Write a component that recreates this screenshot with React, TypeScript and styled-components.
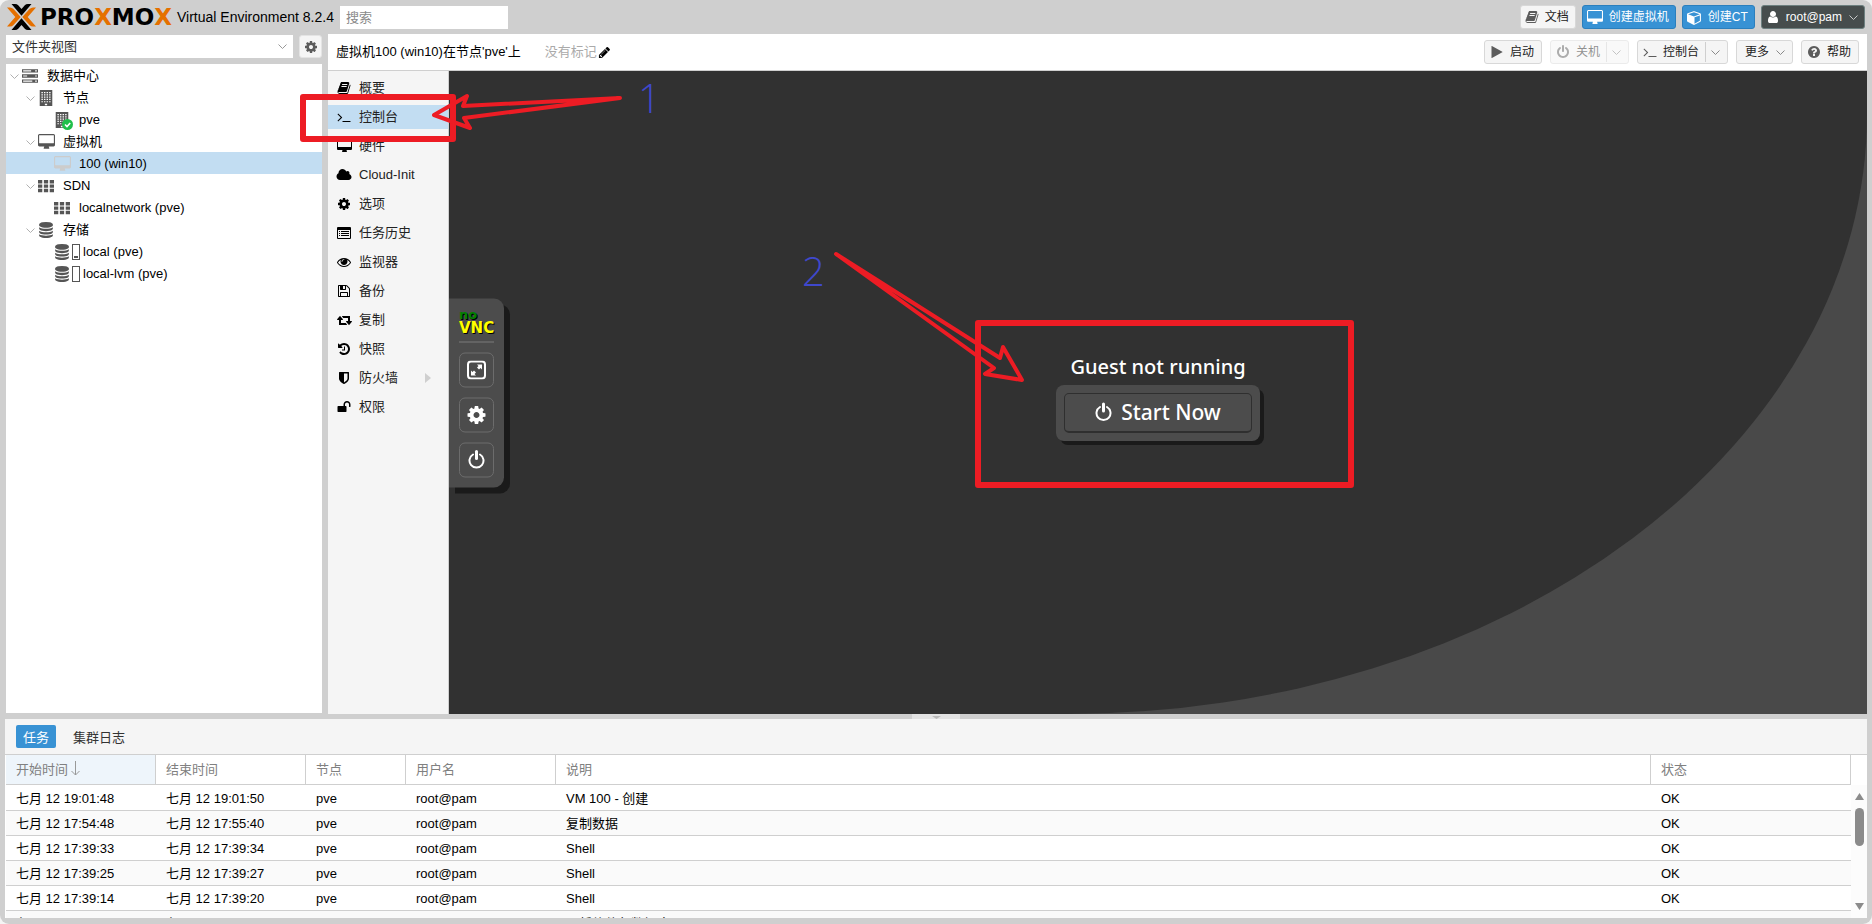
import React from "react";
import styled, { createGlobalStyle } from "styled-components";

const uiFont = `"Liberation Sans", "Noto Sans CJK SC", sans-serif`;

const GlobalStyle = createGlobalStyle`
  * { box-sizing: border-box; }
  body {
    margin: 0;
    background: #f4f4f4;
    font-family: ${uiFont};
    font-size: 13px;
    line-height: 20px;
    color: #000;
  }
  button, input, select { font-family: inherit; font-size: inherit; }
  h1, p, ul { margin: 0; padding: 0; }
`;

/* ---------- icons ---------- */

const glyphs = {
  desktop: "M1792 992v-832q0-13-9.5-22.5t-22.5-9.5h-1600q-13 0-22.5 9.5t-9.5 22.5v832q0 13 9.5 22.5t22.5 9.5h1600q13 0 22.5-9.5t9.5-22.5zm128-832v1088q0 66-47 113t-113 47h-544q0 37 16 77.5t32 71 16 43.5q0 26-19 45t-45 19h-512q-26 0-45-19t-19-45q0-14 16-44t32-70 16-78h-544q-66 0-113-47t-47-113v-1088q0-66 47-113t113-47h1600q66 0 113 47t47 113z",
  cog: "M1152 896q0-106-75-181t-181-75-181 75-75 181 75 181 181 75 181-75 75-181zm512-109v222q0 12-8 23t-20 13l-185 28q-19 54-39 91 35 50 107 138 10 12 10 25t-9 23q-27 37-99 108t-94 71q-12 0-26-9l-138-108q-44 23-91 38-16 136-29 186-7 28-36 28h-222q-14 0-24.5-8.5t-11.5-21.5l-28-184q-49-16-90-37l-141 107q-10 9-25 9-14 0-25-11-126-114-165-168-7-10-7-23 0-12 8-23 15-21 51-66.5t54-70.5q-27-50-41-99l-183-27q-13-2-21-12.5t-8-23.5v-222q0-12 8-23t19-13l186-28q14-46 39-92-40-57-107-138-10-12-10-24 0-10 9-23 26-36 98.5-107.5t94.5-71.5q13 0 26 10l138 107q44-23 91-38 16-136 29-186 7-28 36-28h222q14 0 24.5 8.5t11.5 21.5l28 184q49 16 90 37l142-107q9-9 24-9 13 0 25 10 129 119 165 170 7 8 7 22 0 12-8 23-15 21-51 66.5t-54 70.5q26 50 41 98l183 28q13 2 21 12.5t8 23.5z",
  power: "M1664 896q0 156-61 298t-164 245-245 164-298 61-298-61-245-164-164-245-61-298q0-182 80.5-343t226.5-270q43-32 95.5-25t83.5 50q32 42 24.5 94.5t-49.5 84.5q-98 74-151.5 181t-53.5 228q0 104 40.5 198.5t109.5 163.5 163.5 109.5 198.5 40.5 198.5-40.5 163.5-109.5 109.5-163.5 40.5-198.5q0-121-53.5-228t-151.5-181q-42-32-49.5-84.5t24.5-94.5q31-43 84-50t95 25q146 109 226.5 270t80.5 343zm-640-768v640q0 52-38 90t-90 38-90-38-38-90v-640q0-52 38-90t90-38 90 38 38 90z",
  play: "M1576 927l-1328 738q-23 13-39.5 3t-16.5-36v-1472q0-26 16.5-36t39.5 3l1328 738q23 13 23 31t-23 31z",
  terminal: "M649 983l-466 466q-10 10-23 10t-23-10l-50-50q-10-10-10-23t10-23l393-393-393-393q-10-10-10-23t10-23l50-50q10-10 23-10t23 10l466 466q10 10 10 23t-10 23zm1079 457v64q0 14-9 23t-23 9h-960q-14 0-23-9t-9-23v-64q0-14 9-23t23-9h960q14 0 23 9t9 23z",
  database: "M896 768q237 0 443-43t325-127v170q0 69-103 128t-280 93.5-385 34.5-385-34.5-280-93.5-103-128v-170q119 84 325 127t443 43zm0 768q237 0 443-43t325-127v170q0 69-103 128t-280 93.5-385 34.5-385-34.5-280-93.5-103-128v-170q119 84 325 127t443 43zm0-384q237 0 443-43t325-127v170q0 69-103 128t-280 93.5-385 34.5-385-34.5-280-93.5-103-128v-170q119 84 325 127t443 43zm0-1152q208 0 385 34.5t280 93.5 103 128v128q0 69-103 128t-280 93.5-385 34.5-385-34.5-280-93.5-103-128v-128q0-69 103-128t280-93.5 385-34.5z",
  history: "M1664 896q0 156-61 298t-164 245-245 164-298 61q-172 0-327-72.5t-264-204.5q-7-10-6.5-22.5t8.5-20.5l137-138q10-9 25-9 16 2 23 12 73 95 179 147t225 52q104 0 198.5-40.5t163.5-109.5 109.5-163.5 40.5-198.5-40.5-198.5-109.5-163.5-163.5-109.5-198.5-40.5q-98 0-188 35.5t-160 101.5l137 138q31 30 14 69-17 40-59 40h-448q-26 0-45-19t-19-45v-448q0-42 40-59 39-17 69 14l130 129q107-101 244.5-156.5t284.5-55.5q156 0 298 61t245 164 164 245 61 298zm-640-288v448q0 14-9 23t-23 9h-320q-14 0-23-9t-9-23v-64q0-14 9-23t23-9h224v-352q0-14 9-23t23-9h64q14 0 23 9t9 23z",
  eye: "M1664 960q-152-236-381-353 61 104 61 225 0 185-131.5 316.5t-316.5 131.5-316.5-131.5-131.5-316.5q0-121 61-225-229 117-381 353 133 205 333.5 326.5t434.5 121.5 434.5-121.5 333.5-326.5zm-720-384q0-20-14-34t-34-14q-125 0-214.5 89.5t-89.5 214.5q0 20 14 34t34 14 34-14 14-34q0-86 61-147t147-61q20 0 34-14t14-34zm848 384q0 34-20 69-140 230-376.5 368.5t-499.5 138.5-499.5-139-376.5-368q-20-35-20-69t20-69q140-229 376.5-368t499.5-139 499.5 139 376.5 368q20 35 20 69z",
  user: "M1536 1399q0 109-62.5 187t-150.5 78h-854q-88 0-150.5-78t-62.5-187q0-85 8.5-160.5t31.5-152 58.5-131 94-89 134.5-34.5q131 128 313 128t313-128q76 0 134.5 34.5t94 89 58.5 131 31.5 152 8.5 160.5zm-256-887q0 159-112.5 271.5t-271.5 112.5-271.5-112.5-112.5-271.5 112.5-271.5 271.5-112.5 271.5 112.5 112.5 271.5z",
  pencil: "M491 1536l91-91-235-235-91 91v107h128v128h107zm523-928q0-22-22-22-10 0-17 7l-542 542q-7 7-7 17 0 22 22 22 10 0 17-7l542-542q7-7 7-17zm-54-192l416 416-832 832h-416v-416zm683 96q0 53-37 90l-166 166-416-416 166-165q36-38 90-38 53 0 91 38l235 234q37 39 37 91z",
  cloud: "M1984 1152q0 159-112.5 271.5t-271.5 112.5h-1088q-185 0-316.5-131.5t-131.5-316.5q0-132 71-241.5t187-163.5q-2-28-2-43 0-212 150-362t362-150q158 0 286.5 88t187.5 230q70-62 166-62 106 0 181 75t75 181q0 75-41 138 129 30 213 134.5t84 239.5z",
  floppy: "M512 1536h768v-384h-768v384zm896 0h128v-896q0-14-10-38.5t-20-34.5l-281-281q-10-10-34-20t-39-10v416q0 40-28 68t-68 28h-576q-40 0-68-28t-28-68v-416h-128v1280h128v-416q0-40 28-68t68-28h832q40 0 68 28t28 68v416zm-384-928v-320q0-13-9.5-22.5t-22.5-9.5h-192q-13 0-22.5 9.5t-9.5 22.5v320q0 13 9.5 22.5t22.5 9.5h192q13 0 22.5-9.5t9.5-22.5zm640 32v928q0 40-28 68t-68 28h-1344q-40 0-68-28t-28-68v-1344q0-40 28-68t68-28h928q40 0 88 20t76 48l280 280q28 28 48 76t20 88z",
  retweet: "M1280 1504q0 13-9.5 22.5t-22.5 9.5h-960q-8 0-13.5-2t-9-7-5.5-8-3-11.5-1-11.5v-600h-192q-26 0-45-19t-19-45q0-24 15-41l320-384q19-22 49-22t49 22l320 384q15 17 15 41 0 26-19 45t-45 19h-192v384h576q16 0 25 11l160 192q7 10 7 21zm640-416q0 24-15 41l-320 384q-20 23-49 23t-49-23l-320-384q-15-17-15-41 0-26 19-45t45-19h192v-384h-576q-16 0-25-12l-160-192q-7-9-7-20 0-13 9.5-22.5t22.5-9.5h960q8 0 13.5 2t9 7 5.5 8 3 11.5 1 11.5v600h192q26 0 45 19t19 45z",
  shield: "M1344 960v-640h-448v1137q119-63 213-137 235-184 235-360zm192-768v768q0 86-33.5 170.5t-83 150-118 127.5-126.5 103-121 77.5-89.5 49.5-42.5 20q-12 6-26 6t-26-6q-16-7-42.5-20t-89.5-49.5-121-77.5-126.5-103-118-127.5-83-150-33.5-170.5v-768q0-26 19-45t45-19h1152q26 0 45 19t19 45z",
  unlock: "M1728 576v256q0 26-19 45t-45 19h-64q-26 0-45-19t-19-45v-256q0-106-75-181t-181-75-181 75-75 181v192h96q40 0 68 28t28 68v576q0 40-28 68t-68 28h-960q-40 0-68-28t-28-68v-576q0-40 28-68t68-28h672v-192q0-185 131.5-316.5t316.5-131.5 316.5 131.5 131.5 316.5z",
  book: "M1703 478q40 57 18 129l-275 906q-19 64-76.5 107.5t-122.5 43.5h-923q-77 0-148.5-53.5t-99.5-131.5q-24-67-2-127 0-4 3-27t4-37q1-8-3-21.5t-3-19.5q2-11 8-21t16.5-23.5 16.5-23.5q23-38 45-91.5t30-91.5q3-10 .5-30t-.5-28q3-11 17-28t17-23q21-36 42-92t25-90q1-9-2.5-32t.5-28q4-13 22-30.5t22-22.5q19-26 42.5-84.5t27.5-96.5q1-8-3-25.5t-2-26.5q2-8 9-18t18-23 17-21q8-12 16.5-30.5t15-35 16-36 19.5-32 26.5-23.5 36-11.5 47.5 5.5l-1 3q38-9 51-9h761q74 0 114 56t18 130l-274 906q-36 119-71.5 153.5t-128.5 34.5h-869q-27 0-38 15-11 16-1 43 24 70 144 70h923q29 0 56-15.5t35-41.5l300-987q7-22 5-57 38 15 59 43zm-1064 2q-4 13 2 22.5t20 9.5h608q13 0 25.5-9.5t16.5-22.5l21-64q4-13-2-22.5t-20-9.5h-608q-13 0-25.5 9.5t-16.5 22.5zm-83 256q-4 13 2 22.5t20 9.5h608q13 0 25.5-9.5t16.5-22.5l21-64q4-13-2-22.5t-20-9.5h-608q-13 0-25.5 9.5t-16.5 22.5z",
  cube: "M896 1629l640-349v-636l-640 233v752zm-64-865l698-254-698-254-698 254zm832-252v768q0 35-18 65t-49 47l-704 384q-28 16-61 16t-61-16l-704-384q-31-17-49-47t-18-65v-768q0-40 23-73t61-47l704-256q22-8 44-8t44 8l704 256q38 14 61 47t23 73z",
  help: "M1024 1376v-192q0-14-9-23t-23-9h-192q-14 0-23 9t-9 23v192q0 14 9 23t23 9h192q14 0 23-9t9-23zm256-672q0-88-55.5-163t-138.5-116-170-41q-243 0-371 213-15 24 8 42l132 100q7 6 19 6 16 0 25-12 53-68 86-92 34-24 86-24 48 0 85.5 26t37.5 59q0 38-20 61t-68 45q-63 28-115.5 86.5t-52.5 125.5v36q0 14 9 23t23 9h192q14 0 23-9t9-23q0-19 21.5-49.5t54.5-49.5q32-18 49-28.5t46-35 44.5-48 28-60.5 12.5-81zm384 192q0 209-103 385.5t-279.5 279.5-385.5 103-385.5-103-279.5-279.5-103-385.5 103-385.5 279.5-279.5 385.5-103 385.5 103 279.5 279.5 103 385.5z",
  list: "M0 256q0-128 128-128h1536q128 0 128 128v1280q0 128-128 128h-1536q-128 0-128-128zM128 512v992q0 32 32 32h1472q32 0 32-32v-992zM256 640h128v128h-128zM512 640h1024v128h-1024zM256 896h128v128h-128zM512 896h1024v128h-1024zM256 1152h128v128h-128zM512 1152h1024v128h-1024z",
  grid: "M0 224h480v384h-480zM656 224h480v384h-480zM1312 224h480v384h-480zM0 736h480v352h-480zM656 736h480v352h-480zM1312 736h480v352h-480zM0 1216h480v384h-480zM656 1216h480v384h-480zM1312 1216h480v384h-480z",
  server: "M0 128h1792v384h-1792zM128 256v128h896v-128zM1472 256v128h192v-128zM0 704h1792v384h-1792zM128 832v128h448v-128zM1472 832v128h192v-128zM0 1280h1792v384h-1792zM128 1408v128h1024v-128zM1472 1408v128h192v-128z",
  building: "M192 0h1408v1792h-1408zM768 1536v160h256v-160zM384 224v128h160v-128zM672 224v128h160v-128zM960 224v128h160v-128zM1248 224v128h160v-128zM384 480v128h160v-128zM672 480v128h160v-128zM960 480v128h160v-128zM1248 480v128h160v-128zM384 736v128h160v-128zM672 736v128h160v-128zM960 736v128h160v-128zM1248 736v128h160v-128zM384 992v128h160v-128zM672 992v128h160v-128zM960 992v128h160v-128zM1248 992v128h160v-128zM384 1248v128h160v-128zM672 1248v128h160v-128zM960 1248v128h160v-128zM1248 1248v128h160v-128z",
};
type Glyph = keyof typeof glyphs;

const wide: Partial<Record<Glyph, number>> = { desktop: 1920, cloud: 2048, retweet: 1920 };
const evenOdd: Glyph[] = ["list", "server", "building"];

function Icon({ name, size = 14 }: { name: Glyph; size?: number }) {
  const w = wide[name] ?? 1792;
  return (
    <svg
      width={Math.round((size * w) / 1792)}
      height={size}
      viewBox={`0 0 ${w} 1792`}
      fill="currentColor"
      fillRule={evenOdd.includes(name) ? "evenodd" : "nonzero"}
      aria-hidden="true"
    >
      <path d={glyphs[name]} />
    </svg>
  );
}

function Chevron({ size = 9 }: { size?: number }) {
  return (
    <svg width={size} height="5" viewBox="0 0 9 5" fill="none" stroke="currentColor" aria-hidden="true">
      <path d="M.5 .5l4 4 4-4" />
    </svg>
  );
}

function PowerOutline() {
  return (
    <svg width="17" height="20" viewBox="0 0 17 20" fill="none" stroke="#fff" strokeWidth="2" strokeLinecap="round" aria-hidden="true">
      <path d="M5 5a7 7 0 1 0 7 0" />
      <path d="M8.5 2v7" strokeWidth="3" />
    </svg>
  );
}

/* ---------- frame ---------- */

const Page = styled.div`
  position: relative;
  display: flex;
  flex-direction: column;
  height: 100vh;
  min-height: 640px;
  padding: 0 5px 6px;
  overflow: hidden;
  border-radius: 9px;
  background: #cfcfcf;
`;

const Header = styled.header`
  display: flex;
  align-items: center;
  height: 34px;
  padding-left: 2px;
`;

const Brand = styled.div`
  display: flex;
  align-items: center;
  gap: 4px;
  width: 170px;
`;

const Wordmark = styled.span`
  font: bold 23px/26px "DejaVu Sans", sans-serif;
  b { color: #e57000; }
`;

const Product = styled.h1`
  font-size: 14px;
  font-weight: 400;
  white-space: nowrap;
`;

const Search = styled.input`
  width: 168px;
  height: 23px;
  margin-left: 6px;
  padding: 0 6px;
  border: 0;
  background: #fff;
  &::placeholder { color: #8a8a8a; }
`;

const HeaderActions = styled.div`
  display: flex;
  gap: 6px;
  margin-left: auto;
  padding-right: 2px;
`;

const tones = {
  plain: "background:#f5f5f5;border-color:#d8d8d8;color:#222;",
  primary: "background:#3892d4;border-color:#2b7fbd;color:#fff;",
  dark: "background:#464d4d;border-color:#6d8080;color:#fff;",
};

const Button = styled.button<{ $tone?: keyof typeof tones; $small?: boolean }>`
  display: flex;
  align-items: center;
  gap: 6px;
  height: 24px;
  padding: ${(p) => (p.$small ? "0 6px 0 4px" : "0 7px 0 5px")};
  border: 1px solid;
  border-radius: 3px;
  font-size: 12px;
  line-height: 20px;
  white-space: nowrap;
  ${(p) => tones[p.$tone ?? "plain"]}
  svg { flex: none; ${(p) => (!p.$tone ? "color:#5c5c5c;" : "")} }
  &:disabled { opacity: 0.5; }
`;

const ButtonLabel = styled.span`
  padding-left: 3px;
`;

const MenuArrow = styled.span<{ $split?: boolean }>`
  display: flex;
  align-items: center;
  height: 20px;
  padding-left: ${(p) => (p.$split ? 5 : 1)}px;
  border-left: ${(p) => (p.$split ? "1px solid #cfcfcf" : "0")};
  && svg { opacity: 0.7; }
`;

const Main = styled.div`
  display: flex;
  flex: 1;
  gap: 6px;
  min-height: 0;
`;

/* ---------- resource tree ---------- */

const Sidebar = styled.aside`
  display: flex;
  flex-direction: column;
  flex: none;
  width: 317px;
  padding: 1px 0 1px 1px;
`;

const ViewBar = styled.div`
  display: flex;
  gap: 6px;
  padding-bottom: 6px;
`;

const SelectBox = styled.div`
  position: relative;
  flex: 1;
  select {
    width: 100%;
    height: 23px;
    padding: 0 6px;
    border: 0;
    border-radius: 0;
    appearance: none;
    background: #fff;
    color: #333;
  }
  svg {
    position: absolute;
    right: 6px;
    top: 9px;
    color: #999;
    pointer-events: none;
  }
`;

const GearButton = styled.button`
  display: flex;
  align-items: center;
  justify-content: center;
  width: 23px;
  height: 23px;
  padding: 0;
  border: 1px solid #e4e4e4;
  border-radius: 3px;
  background: #f5f5f5;
  color: #5c5c5c;
`;

const Tree = styled.ul`
  flex: 1;
  background: #fff;
  list-style: none;
`;

const TreeRow = styled.li<{ $level: number; $selected?: boolean }>`
  display: flex;
  align-items: center;
  height: 22px;
  padding-top: 2px;
  padding-left: ${(p) => 4 + p.$level * 16}px;
  background: ${(p) => (p.$selected ? "#c2ddf2" : "transparent")};
`;

const Expander = styled.span`
  display: flex;
  width: 12px;
  color: #b0b0b0;
`;

const NodeIcon = styled.span<{ $faded?: boolean; $wide?: boolean }>`
  position: relative;
  display: flex;
  align-items: center;
  gap: 2px;
  width: ${(p) => (p.$wide ? 29 : 25)}px;
  color: ${(p) => (p.$faded ? "#ccc" : "#555")};
`;

const OkBadge = styled.svg`
  position: absolute;
  left: 8px;
  bottom: -2px;
`;

function StorageFill({ low }: { low?: boolean }) {
  return (
    <svg width="8" height="16" viewBox="0 0 8 16" aria-hidden="true">
      <rect x=".5" y=".5" width="7" height="15" fill="#fff" stroke="#555" />
      {low && <rect x="2" y="12" width="4" height="2" fill="#555" />}
    </svg>
  );
}

interface Node {
  label: string;
  level: number;
  icon: Glyph;
  open?: boolean;
  selected?: boolean;
  ok?: boolean;
  storage?: "low" | "empty";
}

const nodes: Node[] = [
  { label: "数据中心", level: 0, icon: "server", open: true },
  { label: "节点", level: 1, icon: "building", open: true },
  { label: "pve", level: 2, icon: "building", ok: true },
  { label: "虚拟机", level: 1, icon: "desktop", open: true },
  { label: "100 (win10)", level: 2, icon: "desktop", selected: true },
  { label: "SDN", level: 1, icon: "grid", open: true },
  { label: "localnetwork (pve)", level: 2, icon: "grid" },
  { label: "存储", level: 1, icon: "database", open: true },
  { label: "local (pve)", level: 2, icon: "database", storage: "low" },
  { label: "local-lvm (pve)", level: 2, icon: "database", storage: "empty" },
];

/* ---------- guest panel ---------- */

const Guest = styled.section`
  display: flex;
  flex-direction: column;
  flex: 1;
  min-width: 0;
  background: #fff;
`;

const GuestBar = styled.div`
  display: flex;
  align-items: center;
  height: 37px;
  padding: 0 8px;
  border-bottom: 1px solid #cfcfcf;
  white-space: nowrap;
`;

const Tags = styled.span`
  display: flex;
  align-items: center;
  gap: 1px;
  margin-left: 24px;
  color: #aaa;
  svg { color: #000; }
`;

const GuestActions = styled.div`
  display: flex;
  gap: 8px;
  margin-left: auto;
`;

const GuestBody = styled.div`
  display: flex;
  flex: 1;
  min-height: 0;
`;

const SideMenu = styled.nav`
  display: flex;
  flex-direction: column;
  gap: 5px;
  flex: none;
  width: 121px;
  padding-top: 5px;
  border-right: 1px solid #cfcfcf;
  background: #f5f5f5;
`;

const MenuItem = styled.a<{ $active?: boolean }>`
  display: flex;
  align-items: center;
  height: 24px;
  padding-left: 8px;
  background: ${(p) => (p.$active ? "#c2ddf2" : "transparent")};
  color: #222;
  text-decoration: none;
`;

const MenuIcon = styled.span`
  display: flex;
  justify-content: center;
  width: 16px;
  margin-right: 7px;
  color: #000;
`;

const SubArrow = styled.svg`
  margin: 0 17px 0 auto;
`;

const menu: { label: string; icon: Glyph; active?: boolean; sub?: boolean }[] = [
  { label: "概要", icon: "book" },
  { label: "控制台", icon: "terminal", active: true },
  { label: "硬件", icon: "desktop" },
  { label: "Cloud-Init", icon: "cloud" },
  { label: "选项", icon: "cog" },
  { label: "任务历史", icon: "list" },
  { label: "监视器", icon: "eye" },
  { label: "备份", icon: "floppy" },
  { label: "复制", icon: "retweet" },
  { label: "快照", icon: "history" },
  { label: "防火墙", icon: "shield", sub: true },
  { label: "权限", icon: "unlock" },
];

const Console = styled.div`
  flex: 1;
  min-width: 0;
  background: #494949;
`;

const Screen = styled.div`
  position: relative;
  display: flex;
  align-items: center;
  justify-content: center;
  height: 100%;
  border-bottom-right-radius: 800px 600px;
  background: #313131;
`;

const VncBar = styled.div`
  position: absolute;
  left: 0;
  top: 50%;
  transform: translateY(-50%);
  display: flex;
  flex-direction: column;
  gap: 10px;
  width: 55px;
  padding: 10px;
  border-radius: 0 10px 10px 0;
  background: #4c4c4c;
  box-shadow: 6px 6px 0 #1a1a1a;
`;

const VncLogo = styled.div`
  padding-bottom: 7px;
  border-bottom: 1px solid #7a7a7a;
  font: bold 15px/14px "DejaVu Sans", sans-serif;
  color: #ff0;
  text-shadow: 1px 1px 0 #000;
`;

const VncPrefix = styled.span`
  display: block;
  font-size: 13px;
  line-height: 12px;
  color: #008000;
`;

const VncButton = styled.button`
  display: flex;
  align-items: center;
  justify-content: center;
  height: 35px;
  padding: 0;
  border: 1px solid #6c6c6c;
  border-radius: 6px;
  background: transparent;
  color: #fff;
`;

const Notice = styled.div`
  display: flex;
  flex-direction: column;
  align-items: center;
  gap: 4px;
  padding-top: 8px;
  font-family: "Noto Sans", sans-serif;
  font-size: 20px;
  font-weight: 500;
  line-height: 28px;
  color: #fff;
`;

const StartFrame = styled.div`
  padding: 8px;
  border-radius: 8px;
  background: #4c4c4c;
  box-shadow: 4px 4px 0 #1a1a1a;
`;

const StartButton = styled.button`
  display: flex;
  align-items: center;
  justify-content: center;
  gap: 9px;
  width: 188px;
  height: 40px;
  border: 1px solid #2f2f2f;
  border-bottom-width: 2px;
  border-radius: 5px;
  background: transparent;
  font-weight: inherit;
  color: #fff;
  && { font-size: 21px; }
`;

/* ---------- log panel ---------- */

const Splitter = styled.div`
  display: flex;
  justify-content: center;
  flex: none;
  height: 5px;
  span {
    display: flex;
    justify-content: center;
    width: 48px;
    padding-top: 2px;
    background: #e2e2e2;
  }
`;

const Logs = styled.section`
  flex: none;
  height: 199px;
  overflow: hidden;
  background: #fff;
`;

const Tabs = styled.div`
  display: flex;
  align-items: center;
  gap: 10px;
  height: 36px;
  padding: 0 11px 1px;
  border-bottom: 1px solid #cfcfcf;
  background: #f5f5f5;
`;

const Tab = styled.button<{ $active?: boolean }>`
  height: 23px;
  padding: 0 7px;
  border: 0;
  border-radius: 2px;
  background: ${(p) => (p.$active ? "#3892d4" : "transparent")};
  color: ${(p) => (p.$active ? "#fff" : "#333")};
`;

const LogBody = styled.div`
  display: flex;
  padding-left: 1px;
  background: #fff;
`;

const Table = styled.table`
  flex: 1;
  table-layout: fixed;
  border-spacing: 0;
  th, td {
    padding: 0 10px;
    border-bottom: 1px solid #cfcfcf;
    text-align: left;
    white-space: nowrap;
    overflow: hidden;
  }
  th {
    height: 30px;
    border-right: 1px solid #cfcfcf;
    font-weight: 400;
    color: #808080;
  }
  th:first-child { background: #eef5fb; }
  th svg { margin-left: 2px; vertical-align: -2px; }
  td { height: 25px; padding-top: 2px; }
  tbody tr:first-child td { height: 26px; }
  tbody tr:nth-child(even) td { background: #fafafa; }
`;

const ScrollColumn = styled.div`
  display: flex;
  flex-direction: column;
  align-items: center;
  flex: none;
  width: 16px;
  height: 163px;
  padding: 8px 0;
  border-top: 30px solid #fff;
  background: #fcfcfc;
  svg { flex: none; }
`;

const Thumb = styled.div`
  width: 9px;
  height: 38px;
  margin: 8px 0 auto;
  border-radius: 5px;
  background: #8b8b8b;
`;

const tasks = [
  ["七月 12 19:01:48", "七月 12 19:01:50", "VM 100 - 创建"],
  ["七月 12 17:54:48", "七月 12 17:55:40", "复制数据"],
  ["七月 12 17:39:33", "七月 12 17:39:34", "Shell"],
  ["七月 12 17:39:25", "七月 12 17:39:27", "Shell"],
  ["七月 12 17:39:14", "七月 12 17:39:20", "Shell"],
  ["七月 12 17:38:33", "七月 12 17:38:38", "更新软件包数据库"],
];

/* ---------- hand-drawn notes over the page ---------- */

const Notes = styled.svg`
  position: absolute;
  left: 0;
  top: 0;
  pointer-events: none;
  text { font: 300 40px "Open Sans", sans-serif; }
`;

export default function App() {
  return (
    <Page>
      <GlobalStyle />
      <Header>
        <Brand>
          <svg width="29" height="26" viewBox="0 0 29 26" aria-hidden="true">
            <path d="M0 3.5h3q2 0 3.500 1.500L13.700 13 6.500 21q-1.500 1.500-3.500 1.500H0L8.300 13z" fill="#e57000" />
            <path d="M29 3.500h-3q-2 0-3.500 1.500L15.300 13l7.200 8q1.500 1.500 3.500 1.500h3L20.700 13z" fill="#e57000" />
            <path d="M4.500 0h3.500q2 0 3.200 1.300L14.500 5l3.300-3.700Q19 0 21 0h3.500L14.500 11.800z" fill="#000" />
            <path d="M4.500 26h3.500q2 0 3.200-1.300L14.500 21l3.300 3.700Q19 26 21 26h3.500L14.500 14.200z" fill="#000" />
          </svg>
          <Wordmark>PRO<b>X</b>MO<b>X</b></Wordmark>
        </Brand>
        <Product>Virtual Environment 8.2.4</Product>
        <Search type="text" placeholder="搜索" aria-label="搜索" />
        <HeaderActions>
          <Button $small><Icon name="book" />文档</Button>
          <Button $small $tone="primary"><Icon name="desktop" size={15} />创建虚拟机</Button>
          <Button $small $tone="primary"><Icon name="cube" size={15} />创建CT</Button>
          <Button $small $tone="dark"><Icon name="user" />root@pam<MenuArrow><Chevron /></MenuArrow></Button>
        </HeaderActions>
      </Header>

      <Main>
        <Sidebar>
          <ViewBar>
            <SelectBox>
              <select aria-label="视图"><option>文件夹视图</option></select>
              <Chevron />
            </SelectBox>
            <GearButton aria-label="设置"><Icon name="cog" /></GearButton>
          </ViewBar>
          <Tree>
            {nodes.map((n) => (
              <TreeRow key={n.label} $level={n.level} $selected={n.selected}>
                <Expander>{n.open && <Chevron />}</Expander>
                <NodeIcon $faded={n.selected} $wide={!!n.storage}>
                  <Icon name={n.icon} size={16} />
                  {n.storage && <StorageFill low={n.storage === "low"} />}
                  {n.ok && (
                    <OkBadge width="11" height="11" viewBox="0 0 11 11" aria-hidden="true">
                      <circle cx="5.5" cy="5.5" r="5.5" fill="#21bf4b" />
                      <path d="M3 5.500l2 2 3.200-3.500" fill="none" stroke="#fff" strokeWidth="1.600" />
                    </OkBadge>
                  )}
                </NodeIcon>
                {n.label}
              </TreeRow>
            ))}
          </Tree>
        </Sidebar>

        <Guest>
          <GuestBar>
            <span>虚拟机100 (win10)在节点'pve'上</span>
            <Tags>没有标记<Icon name="pencil" size={13} /></Tags>
            <GuestActions>
              <Button><Icon name="play" />启动</Button>
              <Button disabled><Icon name="power" />关机<MenuArrow $split><Chevron /></MenuArrow></Button>
              <Button><Icon name="terminal" />控制台<MenuArrow $split><Chevron /></MenuArrow></Button>
              <Button><ButtonLabel>更多</ButtonLabel><MenuArrow><Chevron /></MenuArrow></Button>
              <Button><Icon name="help" />帮助</Button>
            </GuestActions>
          </GuestBar>
          <GuestBody>
            <SideMenu>
              {menu.map((m) => (
                <MenuItem key={m.label} href="#" $active={m.active}>
                  <MenuIcon><Icon name={m.icon} size={14} /></MenuIcon>
                  {m.label}
                  {m.sub && (
                    <SubArrow width="6" height="10" viewBox="0 0 6 10" aria-hidden="true">
                      <path d="M0 0l6 5-6 5z" fill="#cfcfcf" />
                    </SubArrow>
                  )}
                </MenuItem>
              ))}
            </SideMenu>
            <Console>
              <Screen>
                <VncBar>
                  <VncLogo><VncPrefix>no</VncPrefix>VNC</VncLogo>
                  <VncButton aria-label="全屏">
                    <svg width="19" height="19" viewBox="0 0 19 19" aria-hidden="true">
                      <rect x="1" y="1" width="17" height="17" rx="3" fill="none" stroke="#fff" strokeWidth="2" />
                      <path d="M10 4h5v5l-1.500-1.500L12 9l-2-2 1.500-1.500zM9 15H4v-5l1.500 1.500L7 10l2 2-1.500 1.500z" fill="#fff" />
                    </svg>
                  </VncButton>
                  <VncButton aria-label="设置"><Icon name="cog" size={21} /></VncButton>
                  <VncButton aria-label="电源"><PowerOutline /></VncButton>
                </VncBar>
                <Notice>
                  <p>Guest not running</p>
                  <StartFrame>
                    <StartButton><PowerOutline />Start Now</StartButton>
                  </StartFrame>
                </Notice>
              </Screen>
            </Console>
          </GuestBody>
        </Guest>
      </Main>

      <Splitter>
        <span>
          <svg width="9" height="3" viewBox="0 0 9 3" aria-hidden="true"><path d="M0 0h9L4.500 3z" fill="#b8b8b8" /></svg>
        </span>
      </Splitter>

      <Logs>
        <Tabs>
          <Tab $active>任务</Tab>
          <Tab>集群日志</Tab>
        </Tabs>
        <LogBody>
          <Table>
            <colgroup>
              <col width="150" />
              <col width="150" />
              <col width="100" />
              <col width="150" />
              <col />
              <col width="200" />
            </colgroup>
            <thead>
              <tr>
                <th>
                  开始时间
                  <svg width="11" height="15" viewBox="0 0 11 15" fill="none" stroke="#999" aria-hidden="true">
                    <path d="M5.500 0v14M1.500 10l4 4 4-4" />
                  </svg>
                </th>
                <th>结束时间</th>
                <th>节点</th>
                <th>用户名</th>
                <th>说明</th>
                <th>状态</th>
              </tr>
            </thead>
            <tbody>
              {tasks.map(([start, end, text]) => (
                <tr key={start}>
                  <td>{start}</td>
                  <td>{end}</td>
                  <td>pve</td>
                  <td>root@pam</td>
                  <td>{text}</td>
                  <td>OK</td>
                </tr>
              ))}
            </tbody>
          </Table>
          <ScrollColumn>
            <svg width="9" height="7" viewBox="0 0 9 7" aria-hidden="true"><path d="M4.500 0L9 7H0z" fill="#8b8b8b" /></svg>
            <Thumb />
            <svg width="9" height="7" viewBox="0 0 9 7" aria-hidden="true"><path d="M4.500 7L9 0H0z" fill="#8b8b8b" /></svg>
          </ScrollColumn>
        </LogBody>
      </Logs>

      <Notes width="1400" height="520" fill="none" stroke="#ed1c24" strokeWidth="4" strokeLinejoin="round" aria-hidden="true">
        <rect x="303" y="97" width="150" height="42" strokeWidth="6" />
        <path d="M434 115L467 96L463 106L620 98L464 118L470 128Z" />
        <rect x="978" y="323" width="373" height="162" strokeWidth="6" />
        <path d="M1022 380L1003 347L1000 358L836 254L994 368L985 374Z" />
        <g fill="#3f48cc" stroke="none">
          <text x="638" y="113">1</text>
          <text x="802" y="286">2</text>
        </g>
      </Notes>
    </Page>
  );
}
